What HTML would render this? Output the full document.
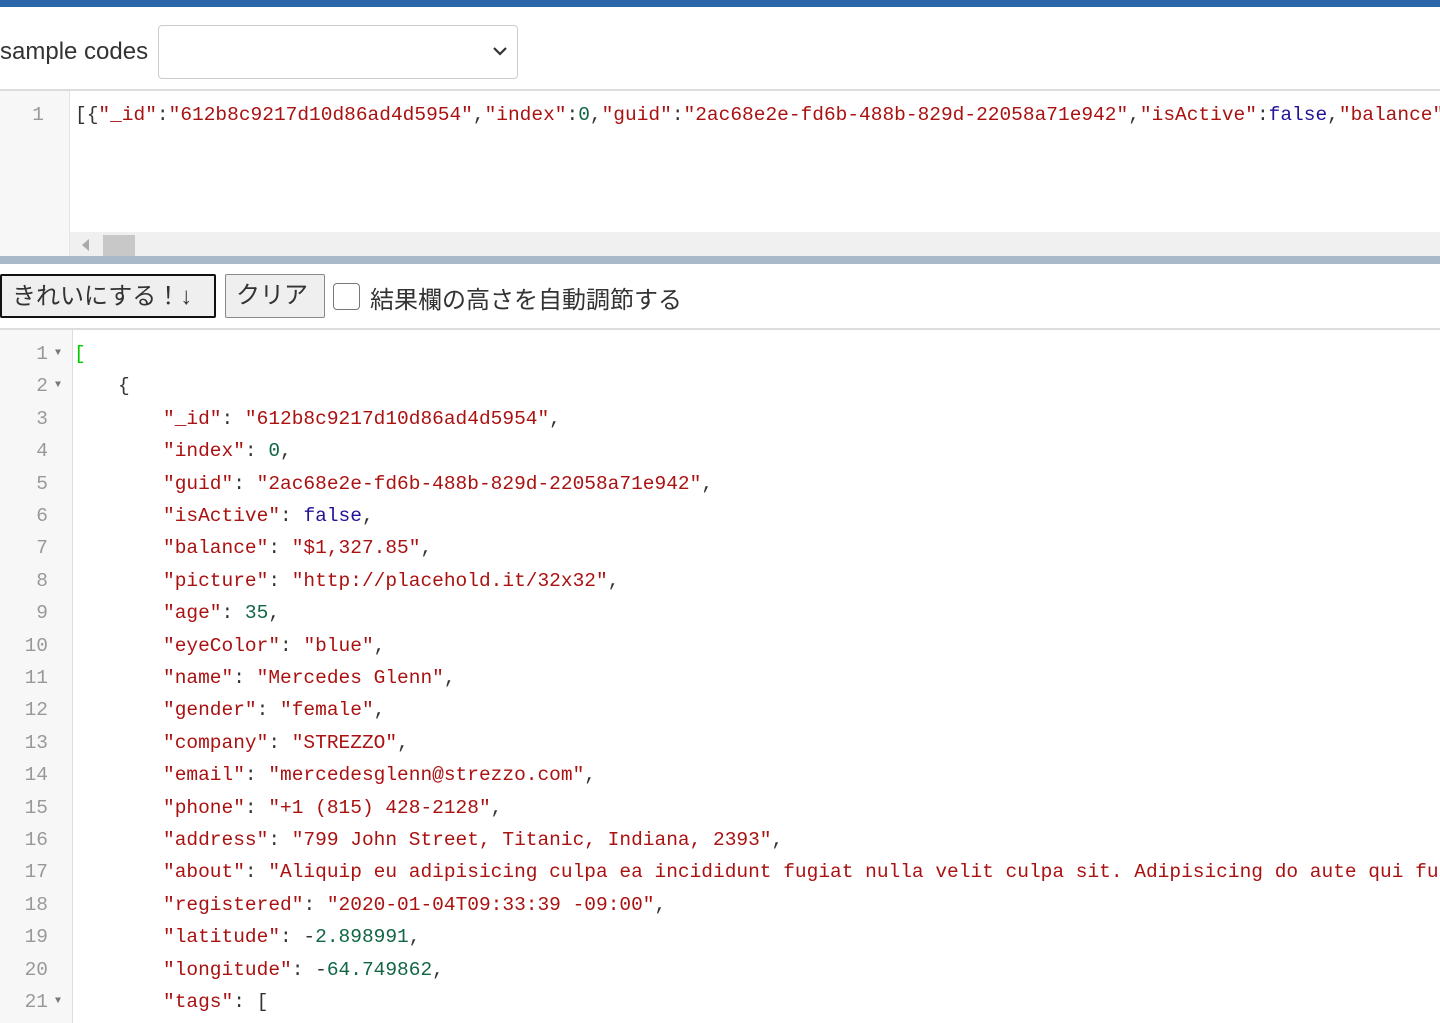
<!DOCTYPE html>
<html><head><meta charset="utf-8"><style>
body{margin:0;width:1440px;height:1023px;overflow:hidden;background:#fff;font-family:"Liberation Sans","Noto Sans CJK JP",sans-serif;position:relative}
.top{position:absolute;left:0;top:0;width:1440px;height:7px;background:#2b67a8}
.lbl{position:absolute;left:0;top:38px;font-size:24px;color:#333}
.sel{position:absolute;left:158px;top:25px;width:360px;height:54px;border:1px solid #ccc;border-radius:4px;box-sizing:border-box}
.sel svg{position:absolute;right:9px;top:20px}
.ed1{position:absolute;left:0;top:89px;width:1440px;height:167px;border-top:2px solid #ddd;box-sizing:border-box;overflow:hidden}
.g1{position:absolute;left:0;top:0;width:69px;height:165px;background:#f7f7f7;border-right:1px solid #e5e5e5}
.mono{font-family:"Liberation Mono","Noto Sans CJK JP",monospace;font-size:19.5px;white-space:pre}
.ln{color:#999;position:absolute;text-align:right}
.s{color:#a11}.n{color:#164}.a{color:#219}
.hs{position:absolute;left:70px;top:141px;width:1370px;height:24px;background:#f0f0f0}
.split{position:absolute;left:0;top:256px;width:1440px;height:8px;background:#a9b9ca}
.btn{position:absolute;top:274px;height:44px;box-sizing:border-box;background:#efefef;font-size:24px;color:#333;line-height:42px;padding:0 10px}
.ed2{position:absolute;left:0;top:328px;width:1440px;height:695px;border-top:2px solid #ddd;box-sizing:border-box;overflow:hidden}
.g2{position:absolute;left:0;top:0;width:72px;height:700px;background:#f7f7f7;border-right:1px solid #ddd}
.row{position:absolute;height:32px;line-height:32px}
.arr{position:absolute;left:55px;font-size:10px;color:#777}
</style></head><body>
<div class="top"></div>
<div class="lbl">sample codes</div>
<div class="sel"><svg width="16" height="10" viewBox="0 0 16 10"><path d="M2 2l6 6 6-6" stroke="#333" stroke-width="2.2" fill="none"/></svg></div>
<div class="ed1">
<div class="g1"></div>
<div class="mono ln" style="left:0;width:44px;top:8px;line-height:32px">1</div>
<div class="mono" style="position:absolute;left:75px;top:8px;line-height:32px;color:#333">[{<span class="s">"_id"</span>:<span class="s">"612b8c9217d10d86ad4d5954"</span>,<span class="s">"index"</span>:<span class="n">0</span>,<span class="s">"guid"</span>:<span class="s">"2ac68e2e-fd6b-488b-829d-22058a71e942"</span>,<span class="s">"isActive"</span>:<span class="a">false</span>,<span class="s">"balance"</span></div>
<div class="hs"><div style="position:absolute;left:12px;top:7px;width:0;height:0;border-top:6px solid transparent;border-bottom:6px solid transparent;border-right:7px solid #aaa"></div><div style="position:absolute;left:33px;top:3px;width:32px;height:21px;background:#c8c8c8"></div></div>
</div>
<div class="split"></div>
<div class="btn" style="left:0;width:216px;border:2px solid #111;border-radius:2px">きれいにする！↓</div>
<div class="btn" style="left:225px;width:100px;border:1px solid #888;border-radius:2px">クリア</div>
<div style="position:absolute;left:333px;top:283px;width:27px;height:27px;border:1px solid #777;border-radius:4px;box-sizing:border-box"></div>
<div style="position:absolute;left:370px;top:280px;font-size:24px;color:#333">結果欄の高さを自動調節する</div>
<div class="ed2">
<div class="g2"></div>
<div class="mono" style="position:absolute;left:0;top:8px;width:1440px;color:#333">
<div class="row ln" style="top:0;width:48px">1</div><div class="arr" style="top:10px">▼</div><div class="row" style="top:0;left:74px;color:#0c0">[</div>
<div class="row ln" style="top:32.4px;width:48px">2</div><div class="arr" style="top:42px">▼</div><div class="row" style="top:32.4px;left:118px">{</div>
<div class="row ln" style="top:64.8px;width:48px">3</div><div class="row" style="top:64.8px;left:163px"><span class="s">"_id"</span>: <span class="s">"612b8c9217d10d86ad4d5954"</span>,</div>
<div class="row ln" style="top:97.2px;width:48px">4</div><div class="row" style="top:97.2px;left:163px"><span class="s">"index"</span>: <span class="n">0</span>,</div>
<div class="row ln" style="top:129.6px;width:48px">5</div><div class="row" style="top:129.6px;left:163px"><span class="s">"guid"</span>: <span class="s">"2ac68e2e-fd6b-488b-829d-22058a71e942"</span>,</div>
<div class="row ln" style="top:162px;width:48px">6</div><div class="row" style="top:162px;left:163px"><span class="s">"isActive"</span>: <span class="a">false</span>,</div>
<div class="row ln" style="top:194.4px;width:48px">7</div><div class="row" style="top:194.4px;left:163px"><span class="s">"balance"</span>: <span class="s">"$1,327.85"</span>,</div>
<div class="row ln" style="top:226.8px;width:48px">8</div><div class="row" style="top:226.8px;left:163px"><span class="s">"picture"</span>: <span class="s">"http://placehold.it/32x32"</span>,</div>
<div class="row ln" style="top:259.2px;width:48px">9</div><div class="row" style="top:259.2px;left:163px"><span class="s">"age"</span>: <span class="n">35</span>,</div>
<div class="row ln" style="top:291.6px;width:48px">10</div><div class="row" style="top:291.6px;left:163px"><span class="s">"eyeColor"</span>: <span class="s">"blue"</span>,</div>
<div class="row ln" style="top:324px;width:48px">11</div><div class="row" style="top:324px;left:163px"><span class="s">"name"</span>: <span class="s">"Mercedes Glenn"</span>,</div>
<div class="row ln" style="top:356.4px;width:48px">12</div><div class="row" style="top:356.4px;left:163px"><span class="s">"gender"</span>: <span class="s">"female"</span>,</div>
<div class="row ln" style="top:388.8px;width:48px">13</div><div class="row" style="top:388.8px;left:163px"><span class="s">"company"</span>: <span class="s">"STREZZO"</span>,</div>
<div class="row ln" style="top:421.2px;width:48px">14</div><div class="row" style="top:421.2px;left:163px"><span class="s">"email"</span>: <span class="s">"mercedesglenn@strezzo.com"</span>,</div>
<div class="row ln" style="top:453.6px;width:48px">15</div><div class="row" style="top:453.6px;left:163px"><span class="s">"phone"</span>: <span class="s">"+1 (815) 428-2128"</span>,</div>
<div class="row ln" style="top:486px;width:48px">16</div><div class="row" style="top:486px;left:163px"><span class="s">"address"</span>: <span class="s">"799 John Street, Titanic, Indiana, 2393"</span>,</div>
<div class="row ln" style="top:518.4px;width:48px">17</div><div class="row" style="top:518.4px;left:163px"><span class="s">"about"</span>: <span class="s">"Aliquip eu adipisicing culpa ea incididunt fugiat nulla velit culpa sit. Adipisicing do aute qui fu</span></div>
<div class="row ln" style="top:550.8px;width:48px">18</div><div class="row" style="top:550.8px;left:163px"><span class="s">"registered"</span>: <span class="s">"2020-01-04T09:33:39 -09:00"</span>,</div>
<div class="row ln" style="top:583.2px;width:48px">19</div><div class="row" style="top:583.2px;left:163px"><span class="s">"latitude"</span>: -<span class="n">2.898991</span>,</div>
<div class="row ln" style="top:615.6px;width:48px">20</div><div class="row" style="top:615.6px;left:163px"><span class="s">"longitude"</span>: -<span class="n">64.749862</span>,</div>
<div class="row ln" style="top:648px;width:48px">21</div><div class="arr" style="top:658px">▼</div><div class="row" style="top:648px;left:163px"><span class="s">"tags"</span>: [</div>
</div>
</div>
</body></html>
